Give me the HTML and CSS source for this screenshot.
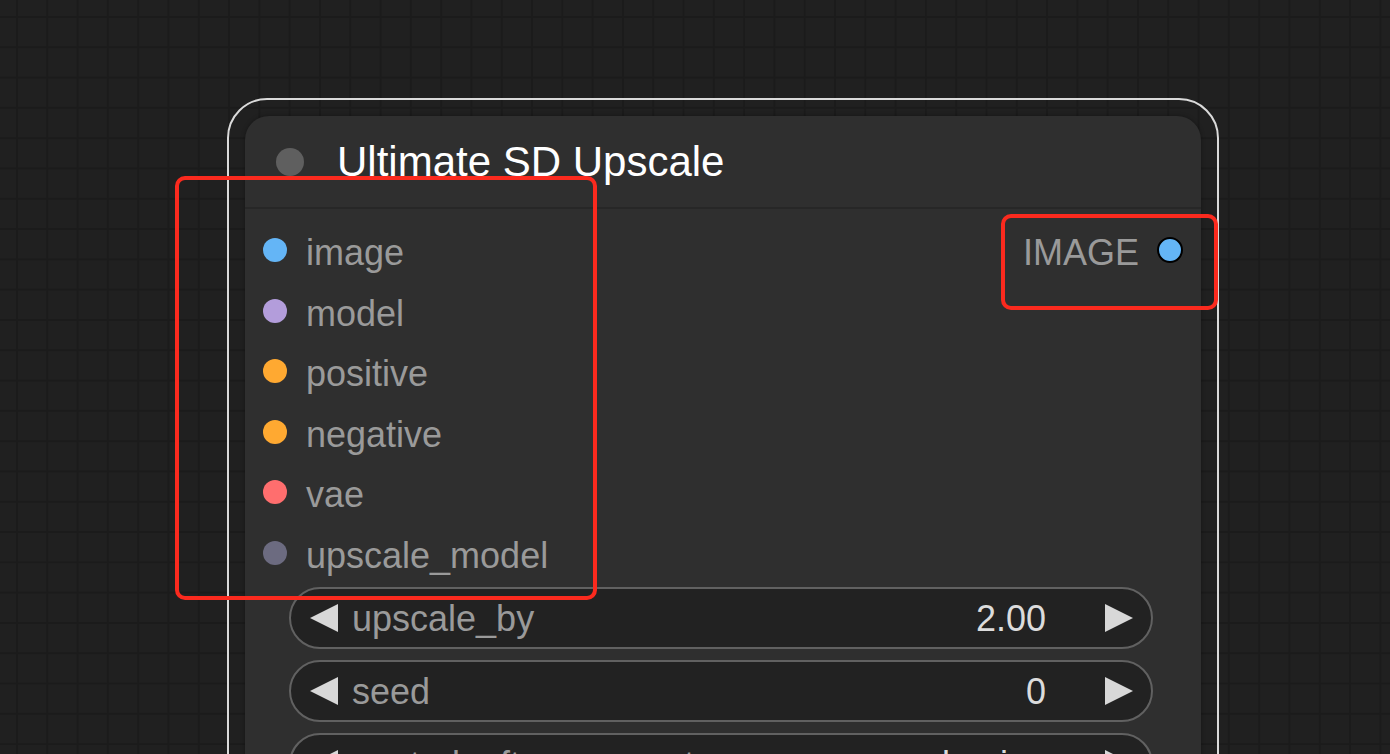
FILE: index.html
```html
<!DOCTYPE html>
<html>
<head>
<meta charset="utf-8">
<link rel="stylesheet" href="styles.css">
</head>
<body>
<div class="canvas">
  <div class="node-outline">
    <div class="node">
      <div class="title-bar">
        <span class="title-dot"></span>
        <span class="title">Ultimate SD Upscale</span>
      </div>
      <div class="node-body">
        <div class="slots">
          <ul class="inputs">
            <li class="slot"><span class="dot c-image"></span><span class="slot-label">image</span></li>
            <li class="slot"><span class="dot c-model"></span><span class="slot-label">model</span></li>
            <li class="slot"><span class="dot c-cond"></span><span class="slot-label">positive</span></li>
            <li class="slot"><span class="dot c-cond"></span><span class="slot-label">negative</span></li>
            <li class="slot"><span class="dot c-vae"></span><span class="slot-label">vae</span></li>
            <li class="slot"><span class="dot c-upscale"></span><span class="slot-label">upscale_model</span></li>
          </ul>
          <ul class="outputs">
            <li class="slot out"><span class="slot-label">IMAGE</span><span class="dot c-image ring"></span></li>
          </ul>
        </div>
        <div class="widgets">
          <div class="widget"><span class="arrow left"></span><span class="w-label">upscale_by</span><span class="w-value">2.00</span><span class="arrow right"></span></div>
          <div class="widget"><span class="arrow left"></span><span class="w-label">seed</span><span class="w-value">0</span><span class="arrow right"></span></div>
          <div class="widget"><span class="arrow left"></span><span class="w-label">control_after_generate</span><span class="w-value">randomize</span><span class="arrow right"></span></div>
        </div>
      </div>
    </div>
  </div>
  <div class="annot annot-inputs"></div>
  <div class="annot annot-output"></div>
</div>
</body>
</html>
```

FILE: styles.css
```css
html, body {
  margin: 0;
  padding: 0;
}
body {
  width: 1390px;
  height: 754px;
  overflow: hidden;
  font-family: "Liberation Sans", Arial, sans-serif;
}
.canvas {
  position: relative;
  width: 1390px;
  height: 754px;
  overflow: hidden;
  background-color: #202020;
  background-image:
    linear-gradient(to right, #1b1b1b 2px, transparent 2px),
    linear-gradient(to bottom, #1b1b1b 2px, transparent 2px);
  background-size: 30.3px 30.3px;
  background-position: 16px 16px;
}
.node-outline {
  position: absolute;
  left: 227px;
  top: 98px;
  width: 992px;
  height: 900px;
  box-sizing: border-box;
  border: 2px solid #dadada;
  border-radius: 40px;
  padding: 16px;
}
.node {
  height: 100%;
  background: #2f2f2f;
  border-radius: 24px;
  box-shadow: 0 0 4px rgba(0,0,0,0.35);
}
.title-bar {
  height: 91px;
  display: flex;
  align-items: center;
  padding-left: 31px;
  border-bottom: 2px solid #272727;
}
.title-dot {
  width: 28px;
  height: 28px;
  border-radius: 50%;
  background: #5f5f5f;
  margin-right: 33px;
  flex: none;
}
.title {
  font-size: 42px;
  line-height: 1;
  color: #ffffff;
  margin-top: 0;
}
.node-body {
  padding-top: 11px;
}
.slots {
  display: flex;
  justify-content: space-between;
}
.inputs, .outputs {
  list-style: none;
  margin: 0;
  padding: 0;
}
.inputs {
  padding-left: 18px;
}
.outputs {
  padding-right: 18px;
}
.slot {
  height: 60.5px;
  display: flex;
  align-items: center;
}
.dot {
  width: 24px;
  height: 24px;
  border-radius: 50%;
  margin-right: 19px;
  flex: none;
}
.dot.ring {
  width: 22px;
  height: 22px;
  border: 2px solid #000;
  margin-right: 0;
  margin-left: 18px;
}
.slot-label {
  font-size: 36px;
  line-height: 1;
  color: #9a9a9a;
  margin-top: 6px;
}
.c-image { background: #64b5f6; }
.c-model { background: #b39ddb; }
.c-cond { background: #ffa931; }
.c-vae { background: #ff6e6e; }
.c-upscale { background: #6c6b80; }
.widgets {
  margin-top: 4px;
  padding: 0 48px 0 44px;
  display: flex;
  flex-direction: column;
  gap: 11px;
}
.widget {
  height: 62px;
  box-sizing: border-box;
  border: 2px solid #616161;
  border-radius: 31px;
  background: #222222;
  display: flex;
  align-items: center;
  padding: 0 18px 0 19px;
}
.arrow {
  width: 28px;
  height: 28px;
  background: #d8d8d8;
  flex: none;
}
.arrow.left {
  clip-path: polygon(0 50%, 100% 0, 100% 100%);
}
.arrow.right {
  clip-path: polygon(0 0, 100% 50%, 0 100%);
}
.w-label {
  flex: 1;
  margin-left: 14px;
  font-size: 36px;
  line-height: 1;
  color: #9a9a9a;
  margin-top: 2px;
}
.w-value {
  margin-right: 59px;
  font-size: 36px;
  line-height: 1;
  color: #dcdcdc;
  margin-top: 2px;
}
.annot {
  position: absolute;
  box-sizing: border-box;
  border: 4px solid #fb2a1e;
  border-radius: 10px;
}
.annot-inputs {
  left: 175px;
  top: 176px;
  width: 422px;
  height: 424px;
}
.annot-output {
  left: 1001px;
  top: 214px;
  width: 217px;
  height: 96px;
}
```
